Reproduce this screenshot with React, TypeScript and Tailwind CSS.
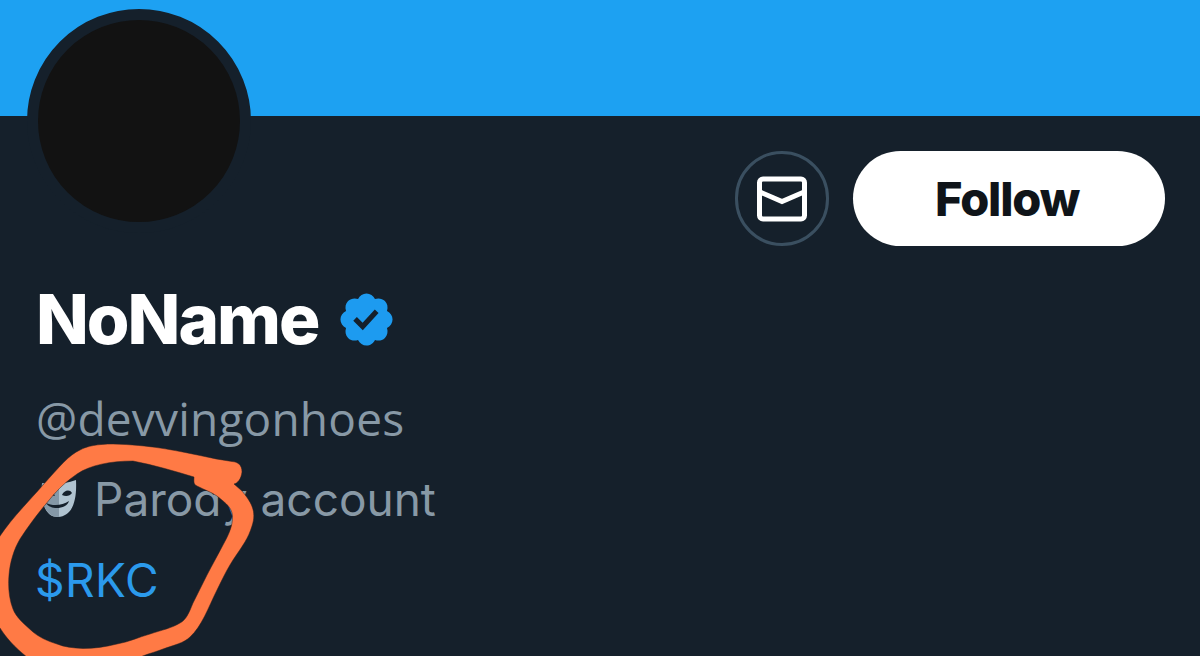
const VerifiedBadge = () => (
  <svg viewBox="0 0 24 24" className="h-[61px] w-[61px] shrink-0" fill="#1d9bf0">
    <path d="M22.25 12c0-1.43-.88-2.67-2.19-3.34.46-1.39.2-2.9-.81-3.91s-2.52-1.27-3.91-.81c-.66-1.31-1.91-2.19-3.34-2.19s-2.67.88-3.33 2.19c-1.4-.46-2.91-.2-3.92.81s-1.26 2.52-.8 3.91c-1.31.67-2.2 1.91-2.2 3.34s.89 2.67 2.2 3.34c-.46 1.39-.21 2.9.8 3.91s2.52 1.26 3.91.81c.67 1.31 1.91 2.19 3.34 2.19s2.68-.88 3.34-2.19c1.39.45 2.9.2 3.91-.81s1.27-2.52.81-3.91c1.31-.67 2.19-1.91 2.19-3.34zm-11.71 4.2L6.8 12.46l1.41-1.42 2.26 2.26 4.8-5.23 1.47 1.36-6.2 6.77z" />
  </svg>
);

const MailIcon = () => (
  <svg viewBox="0 0 50 46" className="h-[46px] w-[50px]" fill="none" stroke="#fff" strokeWidth="5">
    <rect x="2.5" y="3" width="45" height="40" rx="3.500" />
    <path d="M3 16l22 9.500 22-9.500" />
  </svg>
);

const MaskIcon = () => (
  <svg viewBox="0 0 40 40" className="h-10 w-10 shrink-0">
    <path d="M5 4c11 2 23 1 34-3 1 20-3 36-18 37C8 38 4 24 5 4z" fill="#b0c3d0" />
    <path d="M5 4c6 1 11 1 17 1v33C8 38 4 24 5 4z" fill="#8598a7" />
    <path d="M8 17c2-5 8-5 10 0-3-1-6-1-10 0zM25 16c2-5 8-6 10-2-2 3-6 4-10 2z" fill="#15202b" />
    <path d="M9 24c6 3 16 3 23-2-2 8-18 10-23 2z" fill="#15202b" />
  </svg>
);

// hand-drawn marker loop around the cashtag
const MarkerLoop = () => (
  <svg viewBox="0 436 270 220" className="pointer-events-none absolute bottom-0 left-0 h-[220px] w-[270px]">
    <path
      fill="#ff7a45"
      stroke="#30201f"
      strokeWidth="0.5"
      fillRule="evenodd"
      d="M232 461.500C221 460 211 458 200 455.500C173 450 150 445 113 444C98 444 87 446 80 450C69 455 60 466 43 485C30 500 12 518 0 536L-12 555V615L0 628C9 642 18 650 33 662H130C142 655 153 653 163 649C174 645 184 643 190 637C202 626 208 608 217 590C223 578 226 571 233 560C243 545 248 539 252 526C257 511 251 502 242 491L234 484C238 483 241 479 242 472C242 465 238 462 232 461.500ZM194 477C194 481 193 484 197 486C205 490 211 492 217 496C227 504 232 508 232.500 516C233 526 228 536 223 545C218 555 212 565 207 575C202 585 197 595 193 603C189 613 186 620 180 623C172 628 162 630 150 634C139 637 129 642 117 644C105 647 94 648.500 83 648.500C73 648 64 647 57 644C47 641 39 637 33 632C23 623 16 617 13 609C9 599 8 586 9 575C10 562 14 549 20 539C29 525 39 512 50 499C59 488 67 481 77 474C90 465 111 461 133 461C154 465 174 471 194 477Z"
    />
  </svg>
);

export default function App() {
  return (
    <div className="relative h-[656px] w-[1200px] overflow-hidden bg-[#15202b] font-['Inter',sans-serif]">
      <div className="h-[116px] bg-[#1da1f2]" />

      <div className="-mt-[107px] flex h-[275px] items-start justify-between pl-[27px] pr-[35px]">
        <div className="h-[224px] w-[224px] rounded-full border-[11px] border-[#15202b] bg-[#121212]" />
        <div className="mt-[142px] flex gap-6">
          <button className="flex h-[95px] w-[94px] items-center justify-center rounded-full border-[3px] border-[#3a4f60]">
            <MailIcon />
          </button>
          <button className="h-[95px] w-[312px] rounded-full bg-white pt-[2px] pr-1 text-[47px] font-extrabold tracking-[-1.2px] text-[#0f1419]">
            Follow
          </button>
        </div>
      </div>

      <div className="pl-[37px]">
        <div className="flex h-[70px] items-center gap-[14px] text-white">
          <h1 className="-ml-px w-[286px] whitespace-nowrap text-[69px] font-extrabold leading-[70px] tracking-[-2px]">
            NoName
          </h1>
          <VerifiedBadge />
        </div>
        <p className="-ml-px mt-[34px] font-['Open_Sans',sans-serif] text-[46px] leading-[60px] tracking-[0.2px] text-[#8899a6]">
          @devvingonhoes
        </p>
        <div className="mt-[21px] flex h-[60px] items-center gap-[17px] text-[46px] leading-[60px] text-[#8899a6]">
          <MaskIcon />
          <span className="whitespace-nowrap">Parody account</span>
        </div>
        <p className="-ml-[2px] mt-[21px] text-[46px] leading-[60px] tracking-[0.5px] text-[#2b9aec]">$RKC</p>
      </div>

      <MarkerLoop />
    </div>
  );
}
